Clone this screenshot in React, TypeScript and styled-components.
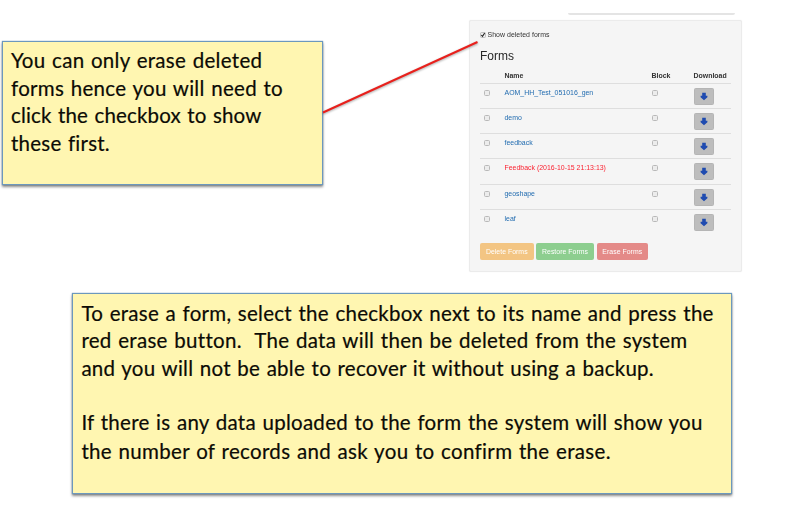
import React from "react";
import styled, { createGlobalStyle } from "styled-components";

const GlobalStyle = createGlobalStyle`
  * { box-sizing: border-box; }
  body { margin: 0; background: #fff; overflow: hidden; }
`;

const Slide = styled.main`
  position: relative;
  width: 800px;
  height: 505px;
  padding: 12.5px 0 0 2px;
  overflow: hidden;
  background: #fff;
`;

const TopRow = styled.div`
  display: flex;
  justify-content: space-between;
  width: 740px;
  height: 280px;
`;

const Note = styled.section<{ $width: number; $height: number }>`
  width: ${(p) => p.$width}px;
  height: ${(p) => p.$height}px;
  border: 1.5px solid #6c98bd;
  background: #fff6b1;
  box-shadow: 0 1.5px 2.5px rgba(0, 0, 0, 0.45), 0 0 1px #6c98bd;
  color: #0c0b05;
  font: 20.5px/27.5px Lato, "Liberation Sans", sans-serif;
  -webkit-text-stroke: 0.2px #0c0b05;
`;

const TipNote = styled(Note)`
  margin-top: 28.5px;
  padding: 5px 0 0 8px;
`;

const EraseNote = styled(Note)`
  margin: 0 0 0 70.4px;
  padding: 6px 0 0 8px;
`;

const Line = styled.p<{ $spacing: number; $height?: number }>`
  margin: 0;
  height: ${(p) => p.$height ?? 27.5}px;
  white-space: pre;
  word-spacing: 1px;
  letter-spacing: ${(p) => p.$spacing}px;
`;

const Capture = styled.div`
  display: flex;
  flex-direction: column;
  width: 273px;
`;

const PanelEdge = styled.div`
  width: 167px;
  height: 2.5px;
  margin: 0 0 4.5px 99px;
  border-radius: 0 0 3px 3px;
  background: #e4e4e4;
  filter: blur(0.4px);
`;

const Panel = styled.section`
  height: 252px;
  padding: 9px 10px 0;
  border: 1px solid #ebebeb;
  border-radius: 2px;
  background: #f5f5f5;
  box-shadow: 0 0 1px #e6e6e6;
  color: #333;
  font: 6.95px/10px "Liberation Sans", Arial, sans-serif;
`;

const Soft = styled.div`
  filter: blur(0.4px);
`;

const ShowDeleted = styled.label`
  display: flex;
  align-items: center;
  gap: 1.5px;
  height: 11px;
  letter-spacing: 0.04px;
`;

const Box = styled.span`
  display: block;
  width: 6px;
  height: 6px;
  border: 1px solid #b9b9b9;
  border-radius: 1.5px;
  background: #ececec;
`;

const Tick = styled.svg`
  display: block;
  width: 6px;
  height: 6px;
`;

const Title = styled.h2`
  margin: 8.5px 0 0;
  height: 22.5px;
  color: #282828;
  font-size: 12px;
  font-weight: 400;
  line-height: 14px;
`;

const Row = styled.div`
  display: grid;
  grid-template-columns: 24.5px 147px 42px 1fr;
  height: 25.15px;
  padding-top: 4px;
  border-top: 1px solid #dedede;

  & > ${Box} { margin: 2px 0 0 3.5px; }
  & > ${Box}:nth-child(3) { margin-left: 0.5px; }
`;

const HeadRow = styled(Row)`
  height: 11.5px;
  padding: 0;
  border: 0;
  font-weight: 700;
  line-height: 7px;
`;

const FormName = styled.span<{ $deleted?: boolean }>`
  color: ${(p) => (p.$deleted ? "#fb1f2e" : "#226cb0")};
  white-space: nowrap;
`;

const DownloadButton = styled.button`
  display: flex;
  align-items: center;
  justify-content: center;
  width: 20.5px;
  height: 17px;
  padding: 0;
  border: 1px solid #b5b5b5;
  border-radius: 1.5px;
  background: #bdbdbd;
`;

const Actions = styled.div`
  display: flex;
  gap: 2.5px;
  margin-top: 9px;
`;

const Action = styled.button<{ $color: string; $width: number }>`
  width: ${(p) => p.$width}px;
  height: 17px;
  padding: 0;
  border: 0;
  border-radius: 2px;
  background: ${(p) => p.$color};
  color: #fff;
  font: 6.9px/17px "Liberation Sans", Arial, sans-serif;
  letter-spacing: 0.03px;
  white-space: nowrap;
`;

const Pointer = styled.svg`
  position: absolute;
  left: 318px;
  top: 34px;
  filter: drop-shadow(0 1.5px 1px rgba(0, 0, 0, 0.35));
`;

const forms = [
  { name: "AOM_HH_Test_051016_gen" },
  { name: "demo" },
  { name: "feedback" },
  { name: "Feedback (2016-10-15 21:13:13)", deleted: true },
  { name: "geoshape" },
  { name: "leaf" },
];

const DownArrow = () => (
  <svg width="8" height="9" viewBox="0 0 8 9">
    <path d="M2.200 .8h3.600v3h1.600v1.400L4 8.200 .6 5.200V3.800h1.600z" fill="#1f4bb0" />
  </svg>
);

export default function App() {
  return (
    <Slide>
      <GlobalStyle />
      <TopRow>
        <TipNote $width={321} $height={143.5}>
          <Line $spacing={0.3}>You can only erase deleted</Line>
          <Line $spacing={0.3}>forms hence you will need to</Line>
          <Line $spacing={0.16}>click the checkbox to show</Line>
          <Line $spacing={0.23}>these first.</Line>
        </TipNote>
        <Capture>
          <PanelEdge />
          <Panel>
            <Soft>
              <ShowDeleted>
                <Tick viewBox="0 0 6 6">
                  <rect x=".5" y=".5" width="5" height="5" rx="1" fill="#eee" stroke="#aaa" strokeWidth=".7" />
                  <path d="M1.3 3l1.2 1.4L4.7 1" fill="none" stroke="#222" strokeWidth="1.1" />
                </Tick>
                Show deleted forms
              </ShowDeleted>
              <Title>Forms</Title>
              <HeadRow>
                <span />
                <span>Name</span>
                <span>Block</span>
                <span>Download</span>
              </HeadRow>
              {forms.map((form) => (
                <Row key={form.name}>
                  <Box />
                  <FormName $deleted={form.deleted}>{form.name}</FormName>
                  <Box />
                  <DownloadButton aria-label="Download">
                    <DownArrow />
                  </DownloadButton>
                </Row>
              ))}
              <Actions>
                <Action $color="#f3c583" $width={53.5}>Delete Forms</Action>
                <Action $color="#8dce8f" $width={58}>Restore Forms</Action>
                <Action $color="#e48a88" $width={51.5}>Erase Forms</Action>
              </Actions>
            </Soft>
          </Panel>
        </Capture>
      </TopRow>
      <EraseNote $width={660} $height={201}>
        <Line $spacing={0.27}>To erase a form, select the checkbox next to its name and press the</Line>
        <Line $spacing={0.3}>{"red erase button.  The data will then be deleted from the system"}</Line>
        <Line $spacing={0.265} $height={54.5}>and you will not be able to recover it without using a backup.</Line>
        <Line $spacing={0.275} $height={28.5}>If there is any data uploaded to the form the system will show you</Line>
        <Line $spacing={0.325}>the number of records and ask you to confirm the erase.</Line>
      </EraseNote>
      <Pointer width="162" height="84">
        <path d="M5 78.5L159.500 8" stroke="#e8201c" strokeWidth="2" fill="none" />
      </Pointer>
    </Slide>
  );
}
